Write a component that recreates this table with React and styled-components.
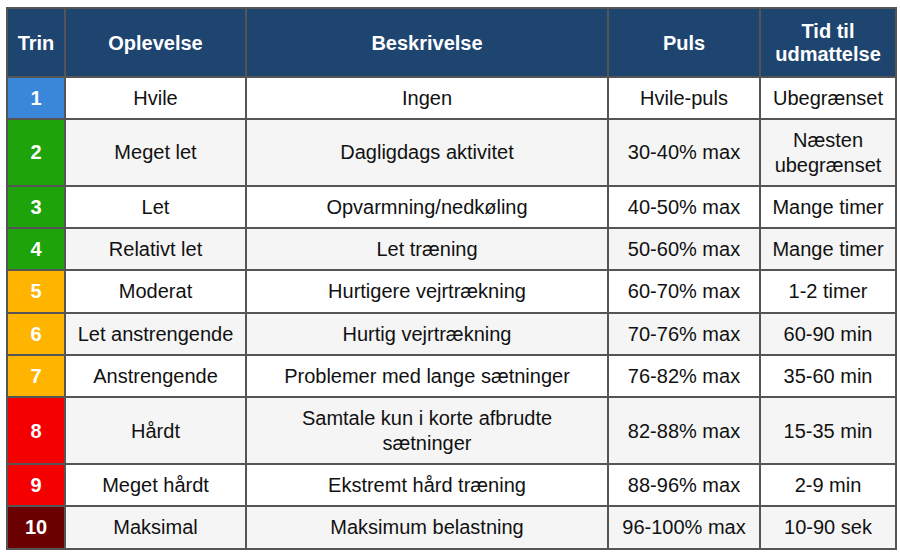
import React from 'react'
import styled, {createGlobalStyle} from 'styled-components';

const GlobalStyle = createGlobalStyle`
  html, body {
    margin: 0;
    padding: 0;
    background: #fff;
  }
  body {
    font-family: "Liberation Sans", Arial, Helvetica, sans-serif;
  }
`;

const Page = styled.div`
  padding: 7px 6px;
`;

const Table = styled.table`
  width: 889px;
  table-layout: fixed;
  border-collapse: collapse;
  border: 2px solid #555;
  font-size: 20px;
  color: #111;
`;

const HeadCell = styled.th`
  background-color: #1e4570;
  color: #fff;
  font-weight: 700;
  line-height: 23px;
  padding: 11px 4px 10px;
  border: 2px solid #555;
  text-align: center;
`;

const Row = styled.tr`
  background-color: ${props => props.$shade ? '#f5f5f5' : '#fff'};
`;

const Cell = styled.td`
  border: 2px solid #555;
  text-align: center;
  line-height: 24.3px;
  padding: 8px 4px;
`;

const StepCell = styled(Cell)`
  background-color: ${props => props.$color};
  color: #fff;
  font-weight: 700;
`;

const stepColors = {
    blue: '#3a86d9',
    green: '#1fa30b',
    amber: '#ffb400',
    red: '#f40000',
    dark: '#6a0000',
};

const rows = [
    {trin: 1, color: 'blue', oplevelse: 'Hvile', beskrivelse: 'Ingen', puls: 'Hvile-puls', tid: 'Ubegrænset'},
    {trin: 2, color: 'green', oplevelse: 'Meget let', beskrivelse: 'Dagligdags aktivitet', puls: '30-40% max', tid: <>Næsten<br/>ubegrænset</>},
    {trin: 3, color: 'green', oplevelse: 'Let', beskrivelse: 'Opvarmning/nedkøling', puls: '40-50% max', tid: 'Mange timer'},
    {trin: 4, color: 'green', oplevelse: 'Relativt let', beskrivelse: 'Let træning', puls: '50-60% max', tid: 'Mange timer'},
    {trin: 5, color: 'amber', oplevelse: 'Moderat', beskrivelse: 'Hurtigere vejrtrækning', puls: '60-70% max', tid: '1-2 timer'},
    {trin: 6, color: 'amber', oplevelse: 'Let anstrengende', beskrivelse: 'Hurtig vejrtrækning', puls: '70-76% max', tid: '60-90 min'},
    {trin: 7, color: 'amber', oplevelse: 'Anstrengende', beskrivelse: 'Problemer med lange sætninger', puls: '76-82% max', tid: '35-60 min'},
    {trin: 8, color: 'red', oplevelse: 'Hårdt', beskrivelse: <>Samtale kun i korte afbrudte<br/>sætninger</>, puls: '82-88% max', tid: '15-35 min'},
    {trin: 9, color: 'red', oplevelse: 'Meget hårdt', beskrivelse: 'Ekstremt hård træning', puls: '88-96% max', tid: '2-9 min'},
    {trin: 10, color: 'dark', oplevelse: 'Maksimal', beskrivelse: 'Maksimum belastning', puls: '96-100% max', tid: '10-90 sek'},
];

export default function App() {
    return (
        <Page>
            <GlobalStyle/>
            <Table>
                <colgroup>
                    <col style={{width: 58}}/>
                    <col style={{width: 181}}/>
                    <col style={{width: 362}}/>
                    <col style={{width: 152}}/>
                    <col style={{width: 136}}/>
                </colgroup>
                <thead>
                    <tr>
                        <HeadCell>Trin</HeadCell>
                        <HeadCell>Oplevelse</HeadCell>
                        <HeadCell>Beskrivelse</HeadCell>
                        <HeadCell>Puls</HeadCell>
                        <HeadCell>Tid til<br/>udmattelse</HeadCell>
                    </tr>
                </thead>
                <tbody>
                    {rows.map((r, i) => (
                        <Row key={r.trin} $shade={i % 2 === 1}>
                            <StepCell $color={stepColors[r.color]}>{r.trin}</StepCell>
                            <Cell>{r.oplevelse}</Cell>
                            <Cell>{r.beskrivelse}</Cell>
                            <Cell>{r.puls}</Cell>
                            <Cell>{r.tid}</Cell>
                        </Row>
                    ))}
                </tbody>
            </Table>
        </Page>
    )
}
